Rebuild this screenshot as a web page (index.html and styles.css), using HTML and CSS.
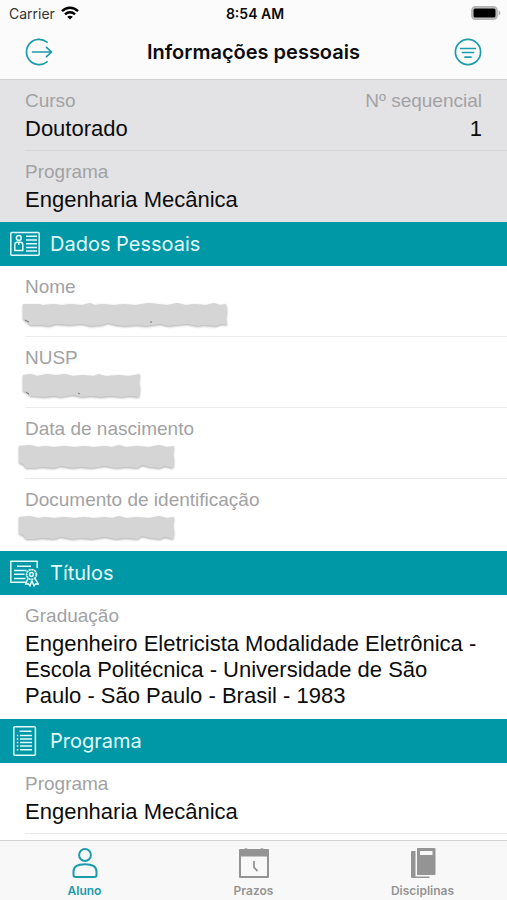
FILE: index.html
```html
<!DOCTYPE html>
<html lang="pt-BR">
<head>
<meta charset="utf-8">
<meta name="viewport" content="width=device-width, initial-scale=1">
<title>Informações pessoais</title>
<link rel="stylesheet" href="styles.css">
</head>
<body>
<header class="top">
  <div class="status">
    <div class="carrier">Carrier
      <svg width="18" height="14" viewBox="0 0 18 14" fill="none" stroke="#000" stroke-width="2.4" aria-hidden="true">
        <path d="M1 5.2C5.5 .6 12.500 .6 17 5.200M4 8.400C6.800 5.600 11.200 5.600 14 8.400"/>
        <path d="M9 13.600 6.200 10.700C7.800 9.300 10.200 9.300 11.800 10.700Z" fill="#000" stroke="none"/>
      </svg>
    </div>
    <div class="time">8:54 AM</div>
    <div class="battery">
      <svg width="30" height="14" viewBox="0 0 30 14" aria-hidden="true">
        <rect x=".9" y=".9" width="25.200" height="12.200" rx="3.500" fill="#ccc" stroke="#b4b4b4" stroke-width="1.600"/>
        <rect x="2.500" y="2.500" width="22" height="9" rx="1.500" fill="#000"/>
        <path d="M27.600 4.500C30 5.600 30 8.400 27.600 9.500Z" fill="#b0b0b0"/>
      </svg>
    </div>
  </div>
  <div class="nav">
    <button class="icon-button" type="button" aria-label="Sair">
      <svg width="28" height="28" viewBox="0 0 28 28" fill="none" stroke="currentColor" stroke-width="1.700" stroke-linecap="round" stroke-linejoin="round">
        <path d="M22 4.200A12.600 12.600 0 1 0 22 23.800M7.500 14H26.500M21.500 9.300 26.500 14 21.500 18.700"/>
      </svg>
    </button>
    <h1>Informações pessoais</h1>
    <button class="icon-button" type="button" aria-label="Filtrar">
      <svg width="28" height="28" viewBox="0 0 28 28" fill="none" stroke="currentColor" stroke-width="1.700" stroke-linecap="round">
        <circle cx="14" cy="14" r="12.600"/>
        <path d="M6.600 10.500H21.400M8.500 14.500H19.500M11 19.200H17"/>
      </svg>
    </button>
  </div>
</header>

<main>
  <dl class="group summary">
    <div class="row split">
      <div><dt>Curso</dt><dd>Doutorado</dd></div>
      <div class="end"><dt>Nº sequencial</dt><dd>1</dd></div>
    </div>
    <div class="row"><dt>Programa</dt><dd>Engenharia Mecânica</dd></div>
  </dl>

  <section>
    <h2>
      <svg width="30" height="30" viewBox="0 0 30 30" fill="none" stroke="currentColor" stroke-width="1.500" aria-hidden="true">
        <rect x=".8" y="3.500" width="28.400" height="22.800" rx="1"/>
        <circle cx="8.800" cy="8.900" r="2.400"/>
        <path d="M4.800 21.500V15.500Q4.800 13.200 7 13.200H10.600Q12.800 13.200 12.800 15.500V21.500ZM8.800 13.200V16M16 7.200H27M16 11H27M16 14.700H27M16 18.400H27M16 22H27"/>
      </svg>
      Dados Pessoais
    </h2>
    <dl class="group">
      <div class="row"><dt>Nome</dt><dd>
        <svg class="redacted" width="206" height="24" viewBox="0 0 206 24" role="img" aria-label="Oculto">
          <path d="M1 1 18 1 20 2 32 1 40 2 48 1 60 2 68 0 73 2 80 1 92 2 101 1 114 2 126 0 136 1 145 2 155 0 164 2 172 1 184 2 192 0 198 2 204 1 205 8 204 15 205 22 200 21 194 23 181 22 176 23 165 21 154 22 147 23 138 21 124 23 114 22 103 23 94 22 86 20 80 22 69 23 60 21 48 22 34 21 27 23 19 22 8 22 4 18 1 16Z"/>
          <path class="specks" d="M3 17 7 19M128 19 130 19"/>
        </svg></dd></div>
      <div class="row"><dt>NUSP</dt><dd>
        <svg class="redacted" width="119" height="24" viewBox="0 0 119 24" role="img" aria-label="Oculto">
          <path d="M1 1 9 0 15 2 25 0 34 1 43 0 51 2 60 1 72 2 76 0 84 2 97 1 107 2 118 0 117 8 118 15 117 23 108 22 100 23 88 22 79 23 69 22 60 23 51 21 39 23 32 22 22 23 8 22 6 19 1 17Z"/>
          <path class="specks" d="M4 18 7 20M56 19 58 20"/>
        </svg></dd></div>
      <div class="row"><dt>Data de nascimento</dt><dd>
        <svg class="redacted wide" width="157" height="24" viewBox="0 0 157 24" role="img" aria-label="Oculto">
          <path d="M1 1 12 0 20 2 27 1 36 2 46 1 57 2 66 1 75 2 87 1 94 2 101 0 108 2 119 1 131 2 141 0 149 2 156 1 155 9 156 17 155 23 147 21 142 23 132 22 124 20 120 23 108 22 98 23 87 21 74 23 63 22 54 23 43 21 36 23 24 22 17 23 8 23 5 19 1 18Z"/>
        </svg></dd></div>
      <div class="row"><dt>Documento de identificação</dt><dd>
        <svg class="redacted wide" width="157" height="24" viewBox="0 0 157 24" role="img" aria-label="Oculto">
          <path d="M1 1 12 0 20 2 27 1 36 2 46 1 57 2 66 1 75 2 87 1 94 2 101 0 108 2 119 1 131 2 141 0 149 2 156 1 155 9 156 17 155 23 147 21 142 23 132 22 124 20 120 23 108 22 98 23 87 21 74 23 63 22 54 23 43 21 36 23 24 22 17 23 8 23 5 19 1 18Z"/>
        </svg></dd></div>
    </dl>
  </section>

  <section>
    <h2>
      <svg width="30" height="30" viewBox="0 0 30 30" fill="none" stroke="currentColor" stroke-width="1.500" stroke-linejoin="round" aria-hidden="true">
        <path d="M16.500 24.200H.8V3.300H27.200V10M7 8.200H21M4 12.500H16.500M4 16.300H14.500M4 20.400H15.500"/>
        <circle cx="21.500" cy="16.500" r="4.900" stroke-dasharray="2.200 .6" stroke-width="1.800"/>
        <circle cx="21.500" cy="16.500" r="1.900"/>
        <path d="M18 20.500 15.500 26.200 18.500 25.800 20 28 21.800 22.500M25 20.500 28.400 26.200 25.500 25.800 24 28 21.800 22.500"/>
      </svg>
      Títulos
    </h2>
    <dl class="group">
      <div class="row"><dt>Graduação</dt><dd>Engenheiro Eletricista Modalidade Eletrônica - Escola Politécnica - Universidade de São Paulo - São Paulo - Brasil - 1983</dd></div>
    </dl>
  </section>

  <section>
    <h2>
      <svg width="30" height="30" viewBox="0 0 30 30" fill="none" stroke="currentColor" stroke-width="1.500" aria-hidden="true">
        <rect x="3.800" y=".8" width="21.600" height="28.400" rx="1"/>
        <path d="M9.500 5.300H21.500M10 9.500H22M10 13H22M10 16.500H22M10 20H22M10 23.800H22M6.800 9.500H8.300M6.800 13H8.300M6.800 16.500H8.300M6.800 20H8.300M6.800 23.800H8.300"/>
      </svg>
      Programa
    </h2>
    <dl class="group continued">
      <div class="row"><dt>Programa</dt><dd>Engenharia Mecânica</dd></div>
    </dl>
  </section>
</main>

<nav class="tabs" aria-label="Seções">
  <a class="tab active" href="#aluno" aria-current="page">
    <svg width="30" height="32" viewBox="0 0 30 32" fill="none" stroke="currentColor" stroke-width="2" stroke-linejoin="round" aria-hidden="true">
      <circle cx="15" cy="8" r="5.900"/>
      <path d="M3.500 28V24.500C3.500 19 7.500 17.200 15 17.200S26.500 19 26.500 24.500V28Q26.500 30 24.500 30H5.500Q3.500 30 3.500 28Z"/>
    </svg>
    Aluno
  </a>
  <a class="tab" href="#prazos">
    <svg width="30" height="32" viewBox="0 0 30 32" fill="none" aria-hidden="true">
      <path fill="currentColor" fill-rule="evenodd" d="M1 2H5Q7 .4 9 2H21Q23 .4 25 2H29Q30 2 30 3V30Q30 31 29 31H1Q0 31 0 30V3Q0 2 1 2ZM2 9.500V29H28V9.500Z"/>
      <path d="M15 14V20.500L18.500 24" stroke="currentColor" stroke-width="1.800"/>
    </svg>
    Prazos
  </a>
  <a class="tab" href="#disciplinas">
    <svg width="30" height="32" viewBox="0 0 30 32" fill="currentColor" aria-hidden="true">
      <path fill-rule="evenodd" d="M9.500 1H26.500Q27.500 1 27.500 2V27Q27.500 28 26.500 28H9.500Q9 28 9 27V2Q9 1 9.500 1ZM12 4V8H24.500V4Z"/>
      <path d="M3 5Q3 4 4 4H7.500V29.500H21.500V31H4Q3 31 3 30Z"/>
    </svg>
    Disciplinas
  </a>
</nav>
</body>
</html>
```
FILE: styles.css
```css
:root {
  --teal: #0097a7;
  --label: #a2a2a4;
  --muted: #949494;
  --line: #ebebed;
}

* {
  box-sizing: border-box;
}

body {
  margin: 0;
  min-height: 100vh;
  display: flex;
  flex-direction: column;
  background: #fff;
  color: #0c0c0c;
  font-family: "Liberation Sans", Arial, sans-serif;
}

h1,
h2,
dl,
dd {
  margin: 0;
}

svg {
  display: block;
  flex: none;
}

.top {
  padding-bottom: 1px;
  background: #fbfbfb;
  border-bottom: 1px solid #cfcfd1;
  font-family: Inter, sans-serif;
}

.status {
  display: grid;
  grid-template-columns: 1fr auto 1fr;
  align-items: center;
  height: 26px;
  padding: 0 6px 0 9px;
  font-size: 14px;
}

.carrier {
  display: flex;
  align-items: center;
  gap: 6px;
  color: #333;
}

.time {
  font-weight: 600;
}

.battery {
  justify-self: end;
}

.nav {
  display: flex;
  align-items: center;
  justify-content: space-between;
  height: 52px;
  padding: 0 25px;
}

.nav h1 {
  font-size: 20px;
  font-weight: 600;
}

.icon-button {
  padding: 0;
  border: 0;
  background: none;
  color: #1a9cad;
  cursor: pointer;
}

main {
  flex: 1;
}

section {
  padding-bottom: 1px;
}

.group {
  padding-left: 25px;
}

.summary {
  background: #e3e3e5;
  --line: #d6d6d8;
}

.row {
  padding: 10px 25px 8px 0;
  border-bottom: 1px solid var(--line);
}

.row:last-child {
  border-bottom-color: transparent;
}

.continued .row:last-child {
  border-bottom-color: var(--line);
}

.split {
  display: flex;
  justify-content: space-between;
}

.end {
  text-align: right;
}

dt {
  margin-bottom: 4px;
  color: var(--label);
  font-size: 19px;
  line-height: 22px;
}

dd {
  font-size: 22px;
  line-height: 26px;
}

.redacted {
  height: 26px;
  margin-left: -3px;
  fill: #d5d5d5;
  filter: drop-shadow(0 1px 1px #aaa);
}

.redacted.wide {
  margin-left: -7px;
}

.specks {
  fill: none;
  stroke: #777;
}

h2 {
  display: flex;
  align-items: center;
  gap: 10px;
  height: 44px;
  padding: 0 10px;
  background: var(--teal);
  color: #e2fbfd;
  font-family: Inter, sans-serif;
  font-size: 20px;
  font-weight: 400;
}

.tabs {
  display: grid;
  grid-template-columns: repeat(3, 1fr);
  height: 60px;
  border-top: 1px solid #d2d2d2;
  background: #f8f8f8;
  font-family: Inter, sans-serif;
}

.tab {
  display: flex;
  flex-direction: column;
  align-items: center;
  gap: 4px;
  padding-top: 6px;
  color: var(--muted);
  font-size: 12px;
  font-weight: 600;
  line-height: 16px;
  text-decoration: none;
}

.tab.active {
  color: #1a9cad;
}
```
